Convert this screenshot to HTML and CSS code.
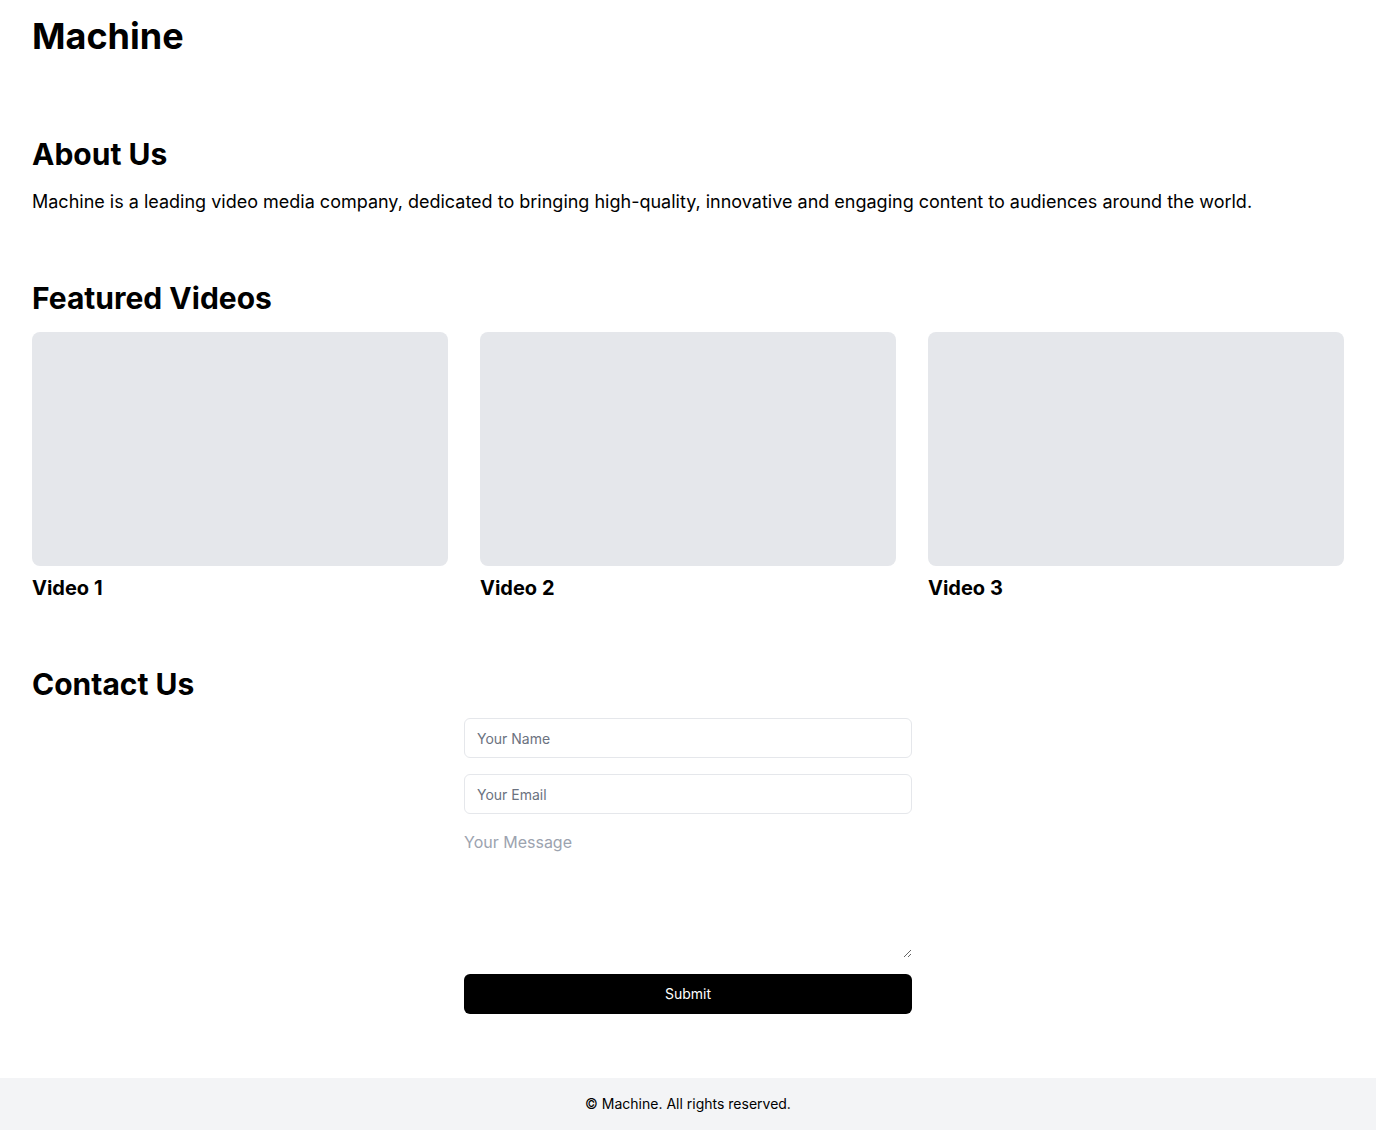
FILE: index.html
```html
<!DOCTYPE html>
<html lang="en">
<head>
<meta charset="utf-8">
<title>Machine</title>
<link rel="stylesheet" href="styles.css">
</head>
<body>
<header class="site-header">
  <h1 class="brand">Machine</h1>
</header>
<main class="main">
  <section class="section">
    <h2 class="section-title">About Us</h2>
    <p class="about-text">Machine is a leading video media company, dedicated to bringing high-quality, innovative and engaging content to audiences around the world.</p>
  </section>
  <section class="section">
    <h2 class="section-title">Featured Videos</h2>
    <div class="video-grid">
      <div class="video-card">
        <div class="video-thumb"></div>
        <h3 class="video-title">Video 1</h3>
      </div>
      <div class="video-card">
        <div class="video-thumb"></div>
        <h3 class="video-title">Video 2</h3>
      </div>
      <div class="video-card">
        <div class="video-thumb"></div>
        <h3 class="video-title">Video 3</h3>
      </div>
    </div>
  </section>
  <section class="section">
    <h2 class="section-title">Contact Us</h2>
    <form class="contact-form">
      <input class="field" type="text" placeholder="Your Name">
      <input class="field" type="email" placeholder="Your Email">
      <textarea class="message" placeholder="Your Message"></textarea>
      <button class="submit" type="button">Submit</button>
    </form>
  </section>
</main>
<footer class="site-footer">
  <p class="footer-text">© Machine. All rights reserved.</p>
</footer>
</body>
</html>
```
FILE: styles.css
```css
* {
  box-sizing: border-box;
}

html, body {
  margin: 0;
  padding: 0;
}

body {
  font-family: Inter, "Noto Sans", sans-serif;
  color: #000;
  background: #fff;
}

.site-header {
  padding: 16px 32px;
}

.brand {
  margin: 0;
  font-size: 36px;
  line-height: 40px;
  font-weight: 700;
}

.main {
  padding: 32px 0;
}

.section {
  padding: 32px;
}

.section-title {
  margin: 0 0 16px;
  font-size: 30px;
  line-height: 36px;
  font-weight: 700;
}

.about-text {
  margin: 0;
  font-size: 18px;
  line-height: 28px;
}

.video-grid {
  display: grid;
  grid-template-columns: repeat(3, 1fr);
  gap: 32px;
}

.video-thumb {
  aspect-ratio: 16 / 9;
  background: #e5e7eb;
  border-radius: 8px;
}

.video-title {
  margin: 8px 0 0;
  font-size: 20px;
  line-height: 28px;
  font-weight: 700;
}

.contact-form {
  max-width: 448px;
  margin: 0 auto;
  display: flex;
  flex-direction: column;
  gap: 16px;
}

.field {
  height: 40px;
  padding: 0 12px;
  border: 1px solid #e5e7eb;
  border-radius: 6px;
  font-family: inherit;
  font-size: 14px;
  color: #000;
  background: #fff;
  outline: none;
}

.field::placeholder {
  color: #6b7280;
}

.message {
  height: 128px;
  padding: 0;
  border: none;
  font-family: inherit;
  font-size: 16px;
  line-height: 24px;
  outline: none;
  background: transparent;
}

.message::placeholder {
  color: #9ca3af;
}

.submit {
  height: 40px;
  border: none;
  border-radius: 6px;
  background: #000;
  color: #fff;
  font-family: inherit;
  font-size: 14px;
  font-weight: 400;
  line-height: 20px;
}

.site-footer {
  background: #f3f4f6;
  padding: 16px;
  text-align: center;
}

.footer-text {
  margin: 0;
  font-size: 14px;
  line-height: 20px;
}
```
